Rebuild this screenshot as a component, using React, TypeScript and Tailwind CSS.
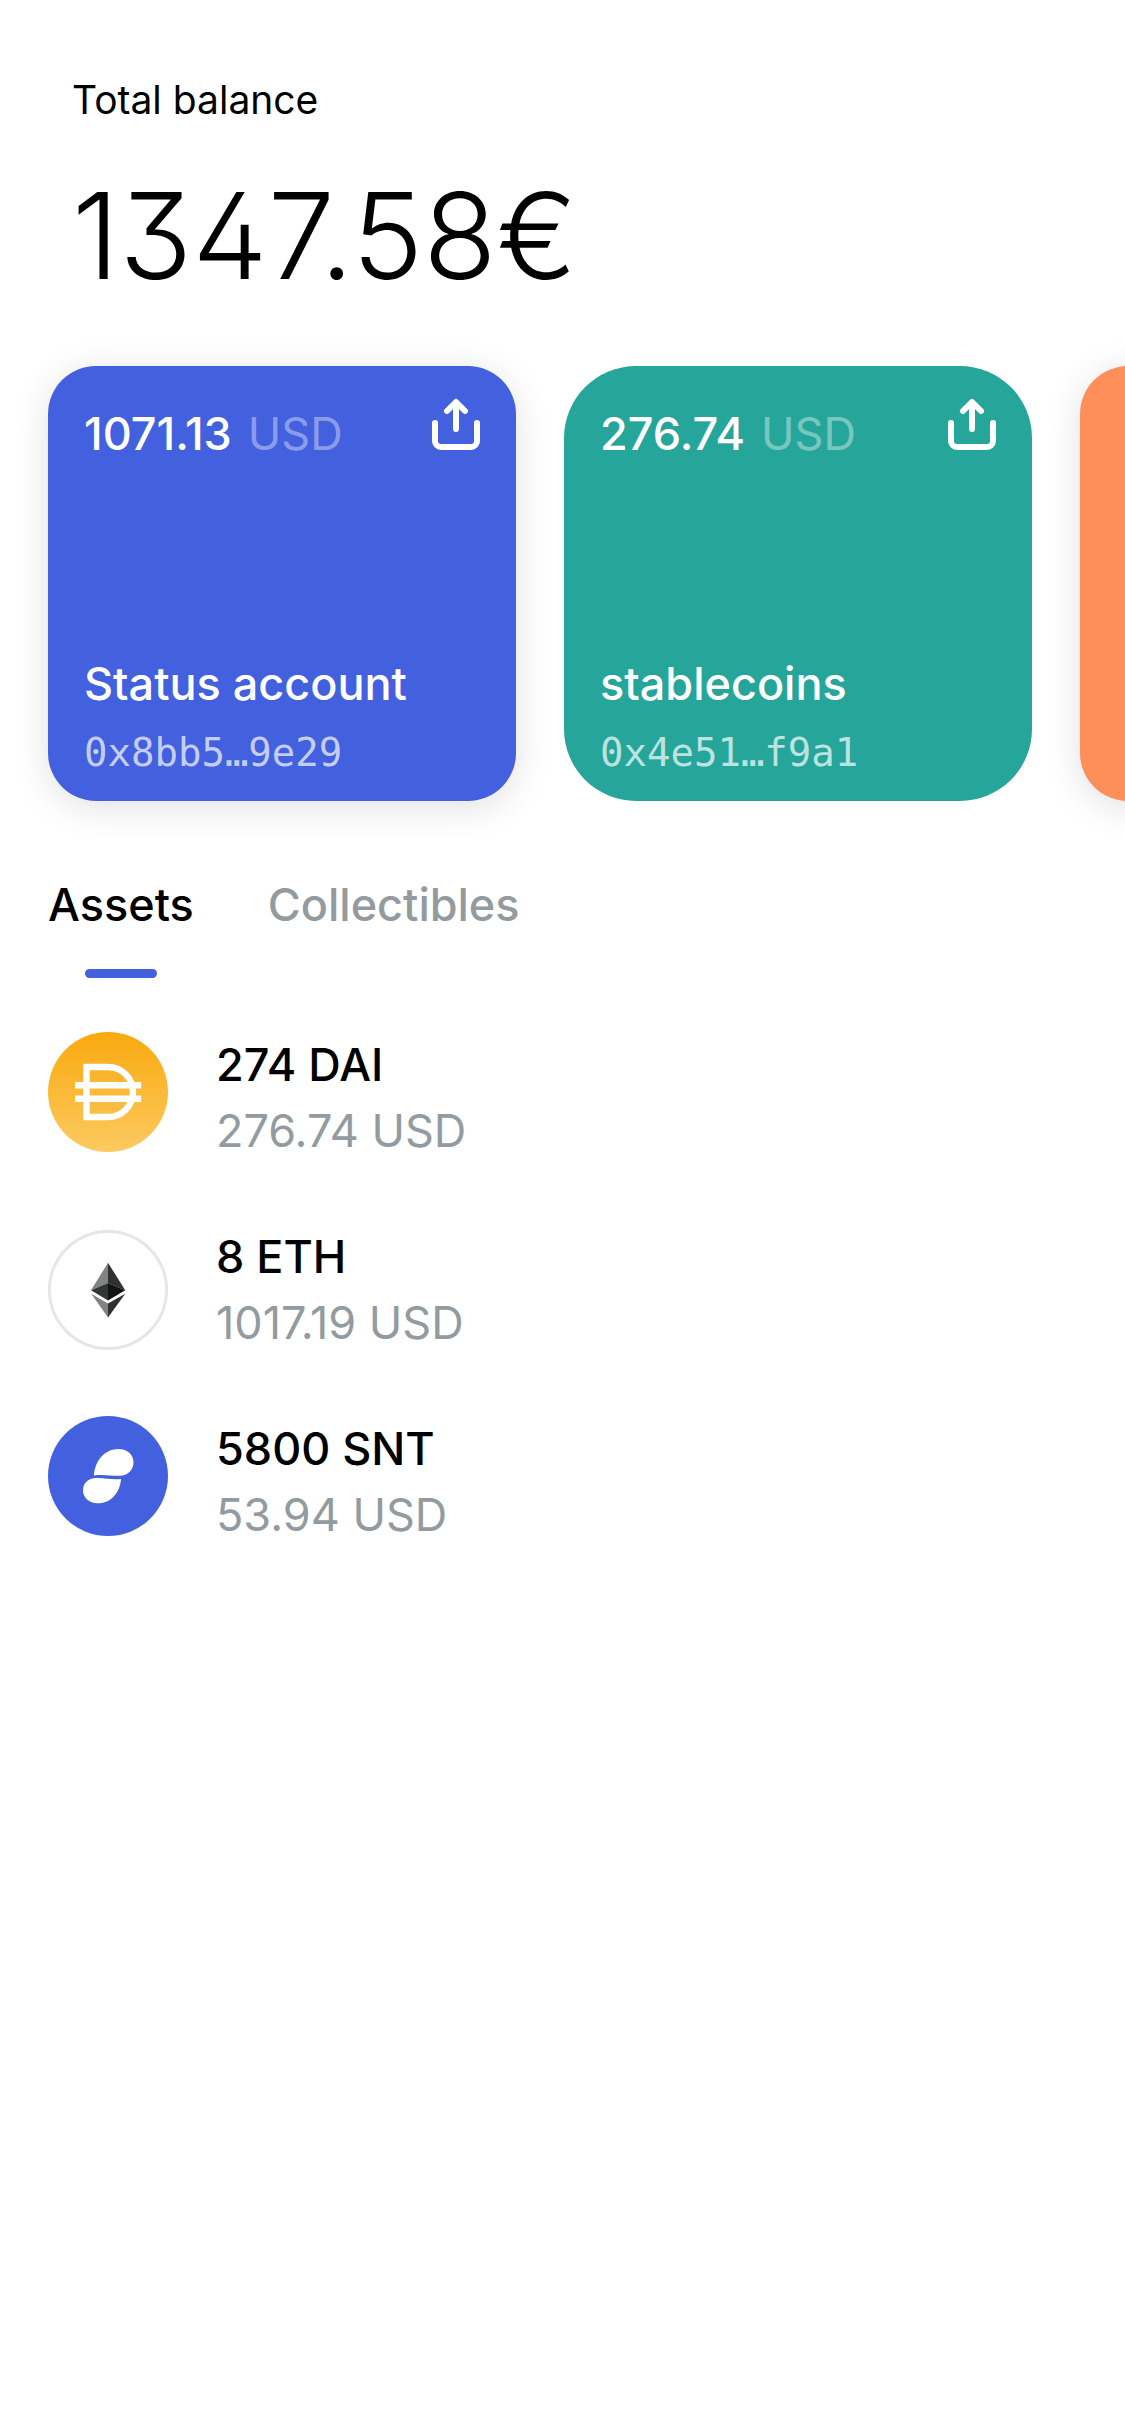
import React from "react";

type Account = {
  amount: string;
  name: string;
  address: string;
  card: string;
};

type Asset = {
  amount: string;
  value: string;
  icon: React.ReactNode;
  iconClass: string;
};

function ShareIcon() {
  return (
    <svg viewBox="0 0 60 60" className="size-[60px]" fill="none" stroke="currentColor" strokeWidth="6" strokeLinecap="round" strokeLinejoin="round" aria-hidden="true">
      <path d="M9 27V45a6 6 0 0 0 6 6H45a6 6 0 0 0 6-6V27" />
      <path d="M30 33V7M21 15L30 6L39 15" />
    </svg>
  );
}

function DaiIcon() {
  return (
    <svg viewBox="0 0 120 120" className="size-[120px]" aria-hidden="true">
      <defs>
        <linearGradient id="dai" x1="0" y1="0" x2="0" y2="1">
          <stop offset="0" stopColor="#f9a90f" />
          <stop offset="1" stopColor="#fcca60" />
        </linearGradient>
      </defs>
      <circle cx="60" cy="60" r="60" fill="url(#dai)" />
      <g fill="none" stroke="#fff" strokeWidth="6.4">
        <path d="M38.5 35H60a25 25 0 0 1 0 50H38.5Z" />
        <path d="M27 53.3H93.2M27 66.8H93.2" />
      </g>
    </svg>
  );
}

function EthIcon() {
  return (
    <svg viewBox="0 0 120 120" className="size-[120px]" aria-hidden="true">
      <circle cx="60" cy="60" r="58.5" fill="#fff" stroke="#e6e6e6" strokeWidth="3" />
      <path d="M60 32.7L43 60.3L60 53Z" fill="#828384" />
      <path d="M60 32.7L77.2 60.3L60 53Z" fill="#2f3030" />
      <path d="M60 53L43 60.3L60 70.4Z" fill="#343535" />
      <path d="M60 53L77.2 60.3L60 70.4Z" fill="#131313" />
      <path d="M43.2 63.7L60 73.6V87.4Z" fill="#828384" />
      <path d="M77.2 63.7L60 73.6V87.4Z" fill="#2f3030" />
    </svg>
  );
}

function SntIcon() {
  return (
    <svg viewBox="0 0 120 120" className="size-[120px]" aria-hidden="true">
      <circle cx="60" cy="60" r="60" fill="#4360df" />
      <g fill="#fff">
        <path d="M46 59.5C46.6 47 55 33 70.500 33C79.500 33 85.500 38.6 85.500 46.4C85.500 54.2 79.5 59.4 72 59.8C63 60.300 56 57.900 46 59.5Z" />
        <path d="M73 62.900C72.400 74 65 87.300 49.500 87.300C41 87.300 35 81.500 35 74.300C35 67 40.500 62.300 48 62C57 61.600 64 64.100 73 62.900Z" />
      </g>
    </svg>
  );
}

const accounts: Account[] = [
  { amount: "1071.13", name: "Status account", address: "0x8bb5…9e29", card: "rounded-[48px] bg-[#4360df] shadow-[0_6px_36px_rgba(0,9,26,0.12)]" },
  { amount: "276.74", name: "stablecoins", address: "0x4e51…f9a1", card: "rounded-[72px] bg-[#26a69a]" },
];

const assets: Asset[] = [
  { amount: "274 DAI", value: "276.74 USD", icon: <DaiIcon />, iconClass: "self-start" },
  { amount: "8 ETH", value: "1017.19 USD", icon: <EthIcon />, iconClass: "self-center" },
  { amount: "5800 SNT", value: "53.94 USD", icon: <SntIcon />, iconClass: "self-start" },
];

function AccountCard({ amount, name, address, card }: Account) {
  return (
    <article className={`flex h-[435px] w-[468px] shrink-0 flex-col justify-between pt-[30px] pr-[30px] pb-[14px] pl-9 text-white ${card}`}>
      <div className="flex items-start justify-between">
        <p className="pt-[5px] text-[45px] leading-[66px] font-medium">
          {amount} <span className="ml-1 font-normal text-white/40">USD</span>
        </p>
        <button type="button" aria-label={`Share ${name}`}>
          <ShareIcon />
        </button>
      </div>
      <div>
        <h2 className="text-[45px] leading-[70px] font-medium">{name}</h2>
        <p className="font-['DejaVu_Sans_Mono',monospace] text-[39px] leading-[68px] text-white/70">{address}</p>
      </div>
    </article>
  );
}

export default function App() {
  return (
    <main className="min-h-screen overflow-x-hidden bg-white font-['Inter',sans-serif] text-black">
      <header className="px-[72px] pt-[70px]">
        <h1 className="text-[39px] leading-[60px]">Total balance</h1>
        <p className="mt-[34px] text-[120px] leading-[144px] font-light [font-feature-settings:'cv02','cv09']">1347.58€</p>
      </header>

      <section aria-label="Accounts" className="flex gap-12 overflow-hidden pt-[58px] pb-[60px] pl-12">
        {accounts.map((account) => (
          <AccountCard key={account.name} {...account} />
        ))}
        <article aria-label="Next account" className="h-[435px] w-[468px] shrink-0 rounded-[48px] bg-[#fe8f59] shadow-[0_6px_36px_rgba(0,9,26,0.12)]" />
      </section>

      <div role="tablist" className="flex gap-[74px] px-12 pt-[11px] text-[45px] leading-[66px] font-medium">
        <button type="button" role="tab" aria-selected="true" className="flex flex-col items-center gap-[31px]">
          Assets
          <span className="h-[9px] w-[72px] rounded-full bg-[#4360df]" />
        </button>
        <button type="button" role="tab" aria-selected="false" className="self-start text-[#939ba1]">
          Collectibles
        </button>
      </div>

      <ul className="flex flex-col gap-[60px] px-12 pt-[54px]">
        {assets.map((asset) => (
          <li key={asset.amount} className="flex gap-12 text-[45px] leading-[66px]">
            <div className={asset.iconClass}>{asset.icon}</div>
            <div>
              <p className="font-medium">{asset.amount}</p>
              <p className="text-[#939ba1]">{asset.value}</p>
            </div>
          </li>
        ))}
      </ul>
    </main>
  );
}
